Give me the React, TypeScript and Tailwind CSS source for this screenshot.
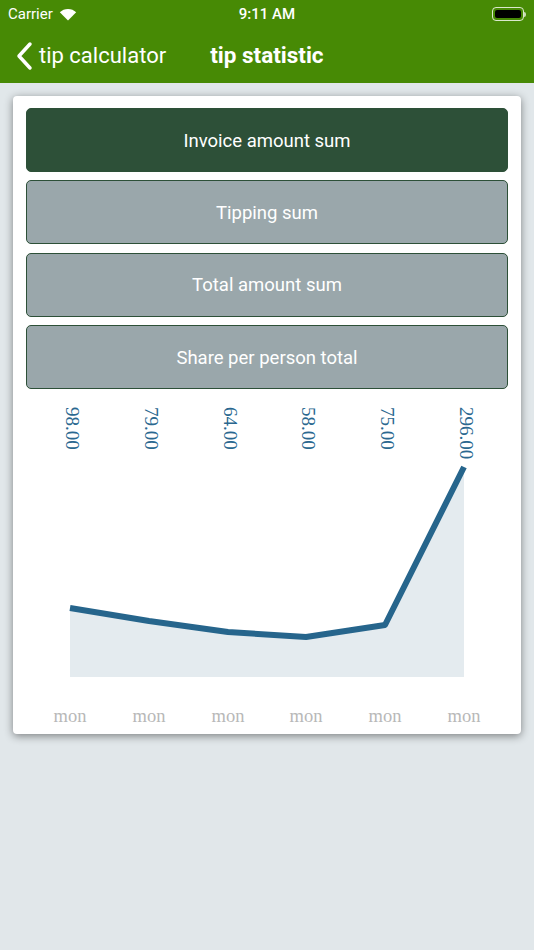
const values = [98, 79, 64, 58, 75, 296];
const xs = [44, 123, 202, 280, 359, 438];
const ys = [212, 225, 236, 241, 229, 71];

const Chart = () => {
    const line = xs.map((x, i) => `${i === 0 ? 'M' : 'L'}${x} ${ys[i]}`).join(' ');
    const area = `${line} L${xs[xs.length - 1]} 281 L${xs[0]} 281 Z`;
    return (
        <svg width="482" height="337" viewBox="0 0 482 337" className="block">
            <path d={area} fill="#e4ebef" />
            <path d={line} fill="none" stroke="#26658c" strokeWidth="6" strokeLinejoin="round" />
            {values.map((v, i) => (
                <text
                    key={i}
                    transform={`translate(${xs[i]} 11) rotate(90)`}
                    dominantBaseline="middle"
                    fill="#2a6890"
                    fontSize="19"
                    fontFamily="'Liberation Serif', serif"
                >
                    {v.toFixed(2)}
                </text>
            ))}
            {xs.map((x, i) => (
                <text
                    key={i}
                    x={x}
                    y={326}
                    textAnchor="middle"
                    fill="#b8b8b8"
                    fontSize="18.5"
                    fontFamily="'Liberation Serif', serif"
                >
                    mon
                </text>
            ))}
        </svg>
    );
};

const tabs = ['Invoice amount sum', 'Tipping sum', 'Total amount sum', 'Share per person total'];

export default function App() {
    return (
        <div className="w-[534px] h-[950px] bg-[#e1e7ea] font-['Roboto',sans-serif] overflow-hidden">
            <div className="bg-[#478a05] text-white">
                {/* status bar */}
                <div className="h-[28px] flex items-center justify-between px-[8px] text-[15px] relative">
                    <div className="flex items-center gap-[6px]">
                        <span>Carrier</span>
                        <svg width="18" height="13" viewBox="0 0 18 13">
                            <path d="M9 12.5 L0.8 4.3 A11.6 11.6 0 0 1 17.2 4.3 Z" fill="white" />
                        </svg>
                    </div>
                    <span className="absolute left-1/2 -translate-x-1/2 font-medium">9:11 AM</span>
                    <div className="flex items-center">
                        <div className="w-[32px] h-[14px] rounded-[4px] border border-white/80 p-[2px]">
                            <div className="w-full h-full bg-black rounded-[2px]" />
                        </div>
                        <div className="w-[2px] h-[5px] bg-white/70 rounded-r-sm" />
                    </div>
                </div>
                {/* nav bar */}
                <div className="h-[55px] flex items-center">
                    <svg width="20" height="30" viewBox="0 0 20 30" className="ml-[15px]">
                        <path d="M15 3 L4 15 L15 27" fill="none" stroke="white" strokeWidth="3.5" strokeLinecap="round" strokeLinejoin="round" />
                    </svg>
                    <span className="ml-[4px] text-[22px]">tip calculator</span>
                    <span className="ml-[44px] text-[22.5px] font-bold">tip statistic</span>
                </div>
            </div>

            <div className="mx-[13px] mt-[13px] bg-white rounded-[4px] shadow-[0_2px_8px_rgba(0,0,0,0.45)] px-[13px] pt-[12px] pb-[1px]">
                <div className="flex flex-col gap-[8.33px]">
                    {tabs.map((t, i) => (
                        <div
                            key={t}
                            className={`h-[64px] pt-[3px] rounded-[5px] border border-[#2d5038] flex items-center justify-center text-white text-[18.5px] ${
                                i === 0 ? 'bg-[#2d5038]' : 'bg-[#9aa7ab]'
                            }`}
                        >
                            {t}
                        </div>
                    ))}
                </div>
                <div className="mt-[7px]">
                    <Chart />
                </div>
            </div>
        </div>
    );
}
